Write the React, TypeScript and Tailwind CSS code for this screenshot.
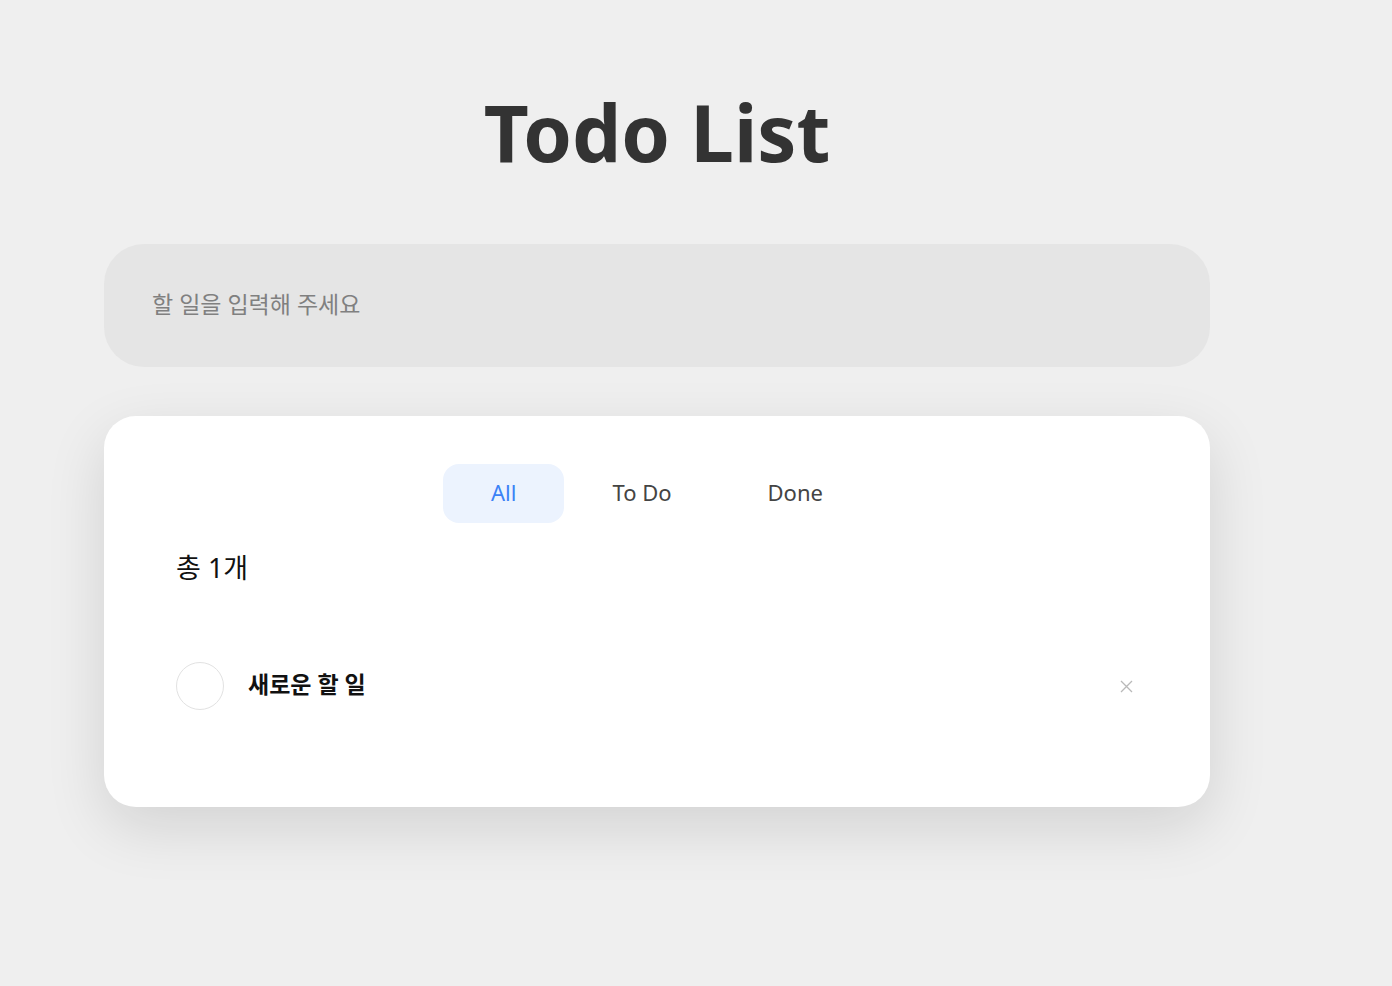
import React, { useState } from 'react';

type Todo = { id: number; text: string; done: boolean };

const tabs = ['All', 'To Do', 'Done'];

const App = () => {
  const [active, setActive] = useState('All');
  const [todos, setTodos] = useState<Todo[]>([{ id: 1, text: '새로운 할 일', done: false }]);

  return (
    <div
      className="min-h-screen bg-[#efefef] pt-[93px] pb-20"
      style={{ fontFamily: '"Noto Sans", "Noto Sans CJK KR", sans-serif' }}
    >
      <div className="ml-[104px] w-[1106px]">
        <h1 className="text-center text-[78px] leading-[78px] font-bold text-[#333333]">Todo List</h1>

        <input
          autoFocus
          placeholder="할 일을 입력해 주세요"
          className="mt-[73px] block h-[123px] w-full rounded-[40px] bg-[#e5e5e5] px-12 pb-[4px] text-[23px] text-[#333] placeholder:text-[#808080] outline-none"
        />

        <div className="mt-[49px] rounded-[32px] bg-white px-[72px] pt-12 pb-[97px] shadow-[0_20px_60px_rgba(0,0,0,0.12)]">
          <div className="flex justify-center">
            {tabs.map((t) => (
              <button
                key={t}
                onClick={() => setActive(t)}
                className={
                  active === t
                    ? 'h-[59px] rounded-2xl bg-[#ecf3fe] px-12 pb-[3px] text-[22px] text-[#3b82f6]'
                    : 'h-[59px] rounded-2xl px-12 pb-[3px] text-[22px] text-[#444444]'
                }
              >
                {t}
              </button>
            ))}
          </div>

          <p className="mt-[26px] text-[27px] leading-[37px] text-[#111]">총 {todos.length}개</p>

          <ul className="mt-[76px]">
            {todos.map((todo) => (
              <li key={todo.id} className="flex items-center">
                <button
                  onClick={() =>
                    setTodos(todos.map((x) => (x.id === todo.id ? { ...x, done: !x.done } : x)))
                  }
                  className="h-12 w-12 shrink-0 rounded-full border border-[#e2e2e2] bg-white"
                />
                <span className="ml-6 flex-1 pb-[3px] text-[23px] font-bold text-[#111]">{todo.text}</span>
                <button
                  onClick={() => setTodos(todos.filter((x) => x.id !== todo.id))}
                  className="flex h-6 w-6 items-center justify-center"
                >
                  <svg width="13" height="13" viewBox="0 0 13 13" fill="none" stroke="#b9b9b9" strokeWidth="1.3">
                    <path d="M1 1L12 12M12 1L1 12" />
                  </svg>
                </button>
              </li>
            ))}
          </ul>
        </div>
      </div>
    </div>
  );
};

export default App;
